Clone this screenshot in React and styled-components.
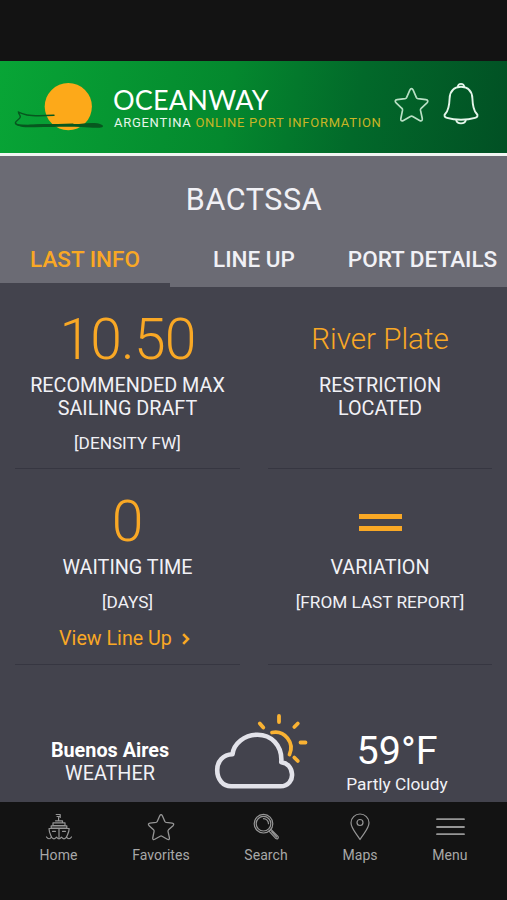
import React from "react";
import styled, { createGlobalStyle } from "styled-components";

const GlobalStyle = createGlobalStyle`
  * {
    box-sizing: border-box;
  }

  body {
    margin: 0;
    background-color: #131313;
    font-family: Roboto, "Liberation Sans", sans-serif;
    color: #f1f1f6;
  }
`;

const Screen = styled.div`
  display: flex;
  flex-direction: column;
  width: 507px;
  height: 900px;
  overflow: hidden;
  background-color: #43434d;
`;

const StatusBar = styled.div`
  flex: none;
  height: 61px;
  background-color: #131313;
`;

const Header = styled.header`
  flex: none;
  display: flex;
  align-items: flex-start;
  height: 95px;
  padding-left: 13px;
  border-bottom: 3px solid #f1f5f2;
  background: linear-gradient(100deg, #08a536 0%, #04882e 45%, #02692a 70%, #015024 100%);

  .boat {
    flex: none;
    margin-top: 20px;
  }

  .star {
    flex: none;
    margin: 26px 0 0 11px;
  }

  .bell {
    flex: none;
    margin: 21px 0 0 12px;
  }
`;

const Brand = styled.div`
  width: 269px;
  margin: 23px 0 0 8px;
  white-space: nowrap;

  .name {
    height: 32px;
    font-family: Lato, sans-serif;
    font-size: 27px;
    line-height: 32px;
    letter-spacing: 0.2px;
    color: #ffffff;
  }

  .tagline {
    margin-left: 1px;
    font-size: 13px;
    line-height: 14px;
    letter-spacing: 0.72px;
    color: #e6f5ea;
  }

  .tagline span {
    color: #c9b526;
  }
`;

const TitleArea = styled.div`
  flex: none;
  height: 131px;
  background-color: #6b6b74;

  h1 {
    margin: 0;
    padding: 24px 0 0 1px;
    font-size: 30.5px;
    line-height: 40px;
    font-weight: 400;
    letter-spacing: 0.6px;
    text-align: center;
  }
`;

const Tabs = styled.div`
  display: grid;
  grid-template-columns: 170px 168px 169px;
  height: 67px;
`;

const Tab = styled.div`
  padding-top: 25px;
  border-bottom: ${({ $active }) => ($active ? "4px solid #43434d" : "none")};
  font-size: 22.5px;
  line-height: 28px;
  font-weight: 500;
  text-align: center;
  white-space: nowrap;
  color: ${({ $active }) => ($active ? "#f9a825" : "#f1f1f6")};
`;

const Grid = styled.div`
  flex: none;
  display: grid;
  grid-template-columns: 225px 224px;
  grid-template-rows: 182px 196px;
  column-gap: 28px;
  padding-left: 15px;
`;

const Cell = styled.div`
  padding-top: 22px;
  border-bottom: 1px solid #363641;
  text-align: center;
  white-space: nowrap;
`;

const Value = styled.div`
  display: flex;
  align-items: center;
  justify-content: center;
  height: 60px;
  font-size: ${({ $size }) => $size}px;
  font-weight: 300;
  letter-spacing: ${({ $spacing }) => $spacing || 0}px;
  color: #f9a825;
`;

const Label = styled.div`
  margin-top: 5px;
  font-size: 19.8px;
  line-height: 23px;
`;

const Unit = styled.div`
  margin-top: 11px;
  font-size: 17.2px;
  line-height: 24px;
`;

const Equals = styled.div`
  width: 43px;
  height: 17px;
  margin-top: 2px;
  border: solid #f9a825;
  border-width: 5px 0;
`;

const LineUpLink = styled.div`
  display: flex;
  align-items: center;
  justify-content: center;
  gap: 10px;
  margin-top: 13px;
  padding-right: 6px;
  font-size: 19.7px;
  line-height: 24px;
  color: #f9a825;
`;

const Weather = styled.div`
  flex: 1;
  display: grid;
  grid-template-columns: 190px 93px 1fr;
  padding-left: 15px;
  text-align: center;
  white-space: nowrap;

  .city {
    padding-top: 74px;
    font-size: 19.8px;
    line-height: 23px;
  }

  .city b {
    display: block;
    font-weight: 700;
    color: #ffffff;
  }

  .sky {
    margin: 47px 0 0 8px;
  }

  .now {
    padding: 64px 11px 0 0;
    font-size: 17.3px;
    line-height: 22px;
  }

  .now strong {
    display: block;
    font-size: 39.5px;
    line-height: 44px;
    font-weight: 400;
    color: #ffffff;
  }
`;

const NavBar = styled.nav`
  flex: none;
  display: flex;
  height: 98px;
  padding-left: 5px;
  background-color: #131313;
`;

const NavItem = styled.div`
  display: flex;
  flex-direction: column;
  align-items: center;
  width: ${({ $width }) => $width}px;
  padding-top: 10px;
  font-size: 14px;
  line-height: 18px;
  letter-spacing: 0.05px;
  color: #a8a8a8;

  svg {
    margin-bottom: 4px;
  }
`;

const starPath =
  "M15 1.5C15.7 1.5 16.1 2 16.5 2.8L19.4 9.4C19.7 10 20.1 10.3 20.8 10.4L27.8 11.2C29.7 11.5 30.1 12.8 28.8 14.1L23.6 18.9C23.1 19.4 22.9 19.9 23 20.6L24.6 28C24.9 29.8 23.9 30.7 22.2 29.7L16.1 26.2C15.4 25.8 14.7 25.8 14 26.2L7.8 29.7C6.1 30.7 5.1 29.8 5.5 28L7 20.6C7.1 19.9 7 19.4 6.4 18.9L1.3 14.1C-.1 12.8.4 11.5 2.2 11.2L9.2 10.4C9.9 10.3 10.3 10 10.6 9.4L13.5 2.8C13.9 2 14.3 1.5 15 1.5Z";

const Star = ({ size, height, stroke, width, className }) => (
  <svg
    className={className}
    width={size}
    height={height}
    viewBox="-1.5 0 33 32"
    preserveAspectRatio="none"
    fill="none"
    stroke={stroke}
    strokeWidth={width}
  >
    <path d={starPath} />
  </svg>
);

const Logo = () => (
  <svg className="boat" width="92" height="52" viewBox="0 0 92 52">
    <circle cx="55.3" cy="25.6" r="23.6" fill="#fda919" />
    <path
      d="M41 34.3C32 34.8 21 35.3 14 34C10 33.2 7 32 5.5 31.2C5.5 33 7.5 34 7.3 36C7 38.5 1.5 40 2.5 42.5C3.5 45 12 44.8 22 44.5L60 43.2"
      fill="none"
      stroke="#07571f"
      strokeWidth="1.4"
      strokeLinecap="round"
    />
    <path
      d="M3 42C5 44.5 14 43.8 24 43.3C38 42.6 54 43.4 66 43C72 42.4 78 41.6 84 42.2C88 42.8 92 44.7 89 46.2C85 47.7 76 46.2 68 46C54 45.6 38 46 22 46.3C11 46.5 4 46 3 42Z"
      fill="#07571f"
    />
  </svg>
);

const Bell = () => (
  <svg className="bell" width="38" height="44" viewBox="0 0 38 44" fill="none" stroke="#e4f5ea" strokeWidth="1.9">
    <path d="M19 4.8C11.5 4.8 7.8 10 7.6 16.5C7.4 22 7.2 27.6 3.5 31.5C1.6 33.5 2.4 35.2 5 35.9C13 38.3 25 38.3 33 35.9C35.6 35.2 36.4 33.5 34.5 31.5C30.8 27.6 30.6 22 30.4 16.5C30.2 10 26.5 4.8 19 4.8Z" />
    <path d="M15.8 5.2C15.6 .7 22.4 .7 22.2 5.2M14.2 37.8C15 42.5 23 42.5 23.8 37.8" />
  </svg>
);

const PartlyCloudy = () => (
  <svg className="sky" width="96" height="78" viewBox="0 0 96 78" fill="none" strokeLinecap="round" strokeLinejoin="round">
    <g stroke="#f9b233" strokeWidth="3.8">
      <path d="M59 20.5A15.8 15.8 0 0 1 76.5 42.5" />
      <path d="M66 4V10M84.8 11.5L81.3 15M87.5 30.5H92.5M81.3 45.5L84.8 49M46.8 11.5L50.3 15.5" />
    </g>
    <path
      d="M18.2 74.3H67.5C75.5 74.3 79.5 68 79 62C78.5 55.5 74.5 51 68.3 50.2C69.5 32.5 57.5 22.7 44.5 22.7C31.5 22.7 20.7 31.5 19.5 42.2C10 42.5 4.2 49.5 4.2 58C4.2 67.5 10 74.3 18.2 74.3Z"
      stroke="#e2e2e9"
      strokeWidth="4.6"
    />
  </svg>
);

const NavIcon = ({ children }) => (
  <svg
    width="30"
    height="30"
    viewBox="0 0 30 30"
    fill="none"
    stroke="#969696"
    strokeWidth="1.2"
    strokeLinecap="round"
    strokeLinejoin="round"
  >
    {children}
  </svg>
);

const ShipIcon = () => (
  <NavIcon>
    <path d="M12.2 2.5H16.2V5.5M13 4.5H15.5M14.6 5.5V8.5M11.5 8.8H18.5V10.8M9 10.8H21V13.5H9ZM7.2 13.8H22.8V16.2H7.2ZM5 16.5H25.2C25.2 20 23.5 22.5 22.5 25M5 16.5C5 20 6.5 22.5 7.5 25M15 16.5V25.5M8.5 19.3H11.5M18.5 19.3H21.5" />
    <path d="M2.5 25C4 27.3 6 27.3 7.3 25.2C9 27.3 11 27.3 12.5 25.2C14 27.3 16 27.3 17.5 25.2C19 27.3 21 27.3 22.5 25.2C24 27.3 26 27.3 27.5 25" />
  </NavIcon>
);

const SearchIcon = () => (
  <NavIcon>
    <circle cx="12.5" cy="11.7" r="9.3" />
    <circle cx="12.5" cy="11.7" r="7.3" />
    <path d="M12.5 6.7A5 5 0 0 1 17.5 11.7M18 19.2L19.8 17.3L27 24.4C28 26 26.4 27.6 24.9 26.6L18 19.2M20.6 19.7L25.6 25" />
  </NavIcon>
);

const PinIcon = () => (
  <NavIcon>
    <path d="M15 27.5C11 20.8 6 16.5 6 10.8A9 8.8 0 0 1 24 10.8C24 16.5 19 20.8 15 27.5Z" />
    <circle cx="15" cy="10.5" r="3" />
  </NavIcon>
);

const MenuIcon = () => (
  <NavIcon>
    <path d="M2 7.2H29M2 15H29M2 22.2H29" strokeWidth="1.8" />
  </NavIcon>
);

const navItems = [
  { name: "Home", width: 107, icon: <ShipIcon /> },
  {
    name: "Favorites",
    width: 98,
    icon: (
      <NavIcon>
        <path d={starPath} transform="translate(2 1.4) scale(.87)" strokeWidth="1.5" />
      </NavIcon>
    ),
  },
  { name: "Search", width: 112, icon: <SearchIcon /> },
  { name: "Maps", width: 76, icon: <PinIcon /> },
  { name: "Menu", width: 104, icon: <MenuIcon /> },
];

const App = () => {
  return (
    <>
      <GlobalStyle />
      <Screen>
        <StatusBar />
        <Header>
          <Logo />
          <Brand>
            <div className="name">OCEANWAY</div>
            <div className="tagline">
              ARGENTINA <span>ONLINE PORT INFORMATION</span>
            </div>
          </Brand>
          <Star className="star" size={37} height={36} stroke="#b9e0c5" width={1.5} />
          <Bell />
        </Header>
        <TitleArea>
          <h1>BACTSSA</h1>
          <Tabs>
            <Tab $active>LAST INFO</Tab>
            <Tab>LINE UP</Tab>
            <Tab>PORT DETAILS</Tab>
          </Tabs>
        </TitleArea>
        <Grid>
          <Cell>
            <Value $size={57} $spacing={-0.8}>
              10.50
            </Value>
            <Label>
              RECOMMENDED MAX
              <br />
              SAILING DRAFT
            </Label>
            <Unit>[DENSITY FW]</Unit>
          </Cell>
          <Cell>
            <Value $size={29.6}>River Plate</Value>
            <Label>
              RESTRICTION
              <br />
              LOCATED
            </Label>
          </Cell>
          <Cell>
            <Value $size={57}>0</Value>
            <Label>WAITING TIME</Label>
            <Unit>[DAYS]</Unit>
            <LineUpLink>
              View Line Up
              <svg width="8" height="12" viewBox="0 0 8 12" fill="none" stroke="#f9a825" strokeWidth="2.6">
                <path d="M1.2 1.2L6 6L1.2 10.8" />
              </svg>
            </LineUpLink>
          </Cell>
          <Cell>
            <Value>
              <Equals />
            </Value>
            <Label>VARIATION</Label>
            <Unit>[FROM LAST REPORT]</Unit>
          </Cell>
        </Grid>
        <Weather>
          <div className="city">
            <b>Buenos Aires</b>
            WEATHER
          </div>
          <PartlyCloudy />
          <div className="now">
            <strong>59°F</strong>
            Partly Cloudy
          </div>
        </Weather>
        <NavBar>
          {navItems.map(({ name, width, icon }) => (
            <NavItem key={name} $width={width}>
              {icon}
              {name}
            </NavItem>
          ))}
        </NavBar>
      </Screen>
    </>
  );
};

export default App;
